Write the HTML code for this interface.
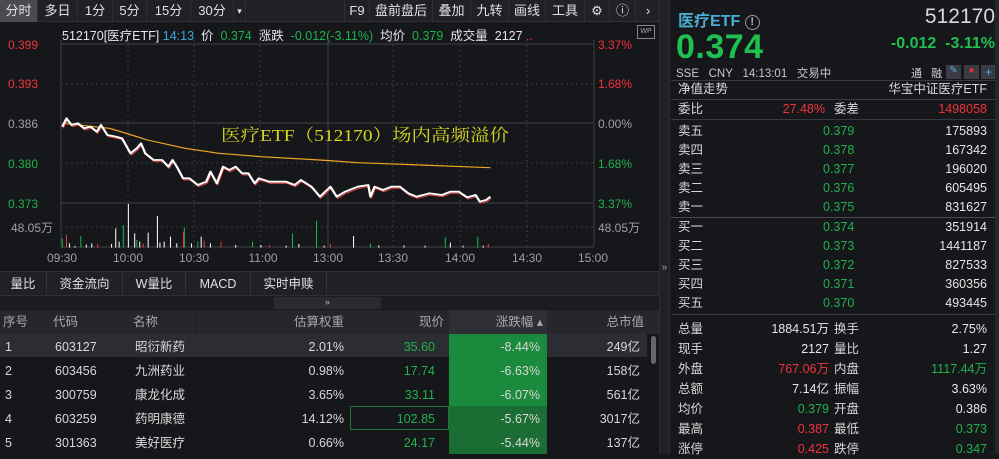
<!DOCTYPE html>
<html><head><meta charset="utf-8"><style>
*{margin:0;padding:0;box-sizing:border-box}
body{width:999px;height:454px;background:#16171b;overflow:hidden;position:relative;font-family:"Liberation Sans","Noto Sans CJK SC",sans-serif;color:#d8d8d8;font-size:12px}
.a{position:absolute;white-space:nowrap}
.g{color:#1fb14c}.r{color:#f0333a}.w{color:#e6e6e6}.gr{color:#a0a0a0}
#tabs{position:absolute;left:0;top:0;width:660px;height:22px;background:#202126;border-bottom:1px solid #2e2f35}
#tabs span{position:absolute;top:0;height:22px;line-height:22px;font-size:13px;color:#e0e0e0;border-right:1px solid #2e2f35;text-align:center}
.rt{position:absolute;left:671px;width:324px}
.row{position:absolute;left:0;width:100%;height:19px;line-height:19px;font-size:12.5px}
.row span{position:absolute}
.tb{position:absolute;left:0;width:660px;height:24px;line-height:24px;font-size:12.5px}
.tb span{position:absolute}
</style></head><body>
<div id="tabs">
<span style="left:0;width:38px;background:#4a4b52">分时</span>
<span style="left:38px;width:40px">多日</span>
<span style="left:78px;width:35px">1分</span>
<span style="left:113px;width:34px">5分</span>
<span style="left:147px;width:44px">15分</span>
<span style="left:191px;width:43px">30分</span>
<span style="left:234px;width:12px;font-size:9px">▾</span>
<span style="left:344px;width:26px;border-left:1px solid #2e2f35">F9</span>
<span style="left:370px;width:63px">盘前盘后</span>
<span style="left:433px;width:38px">叠加</span>
<span style="left:471px;width:38px">九转</span>
<span style="left:509px;width:37px">画线</span>
<span style="left:546px;width:39px">工具</span>
<span style="left:585px;width:25px">⚙</span>
<span style="left:610px;width:26px">ⓘ</span>
<span style="left:636px;width:24px;border:none">›</span>
</div>
<div class="a" style="left:62px;top:25px;font-size:12.5px"><span class="w">512170[医疗ETF]</span> <span style="color:#3aa7d8">14:13</span>&nbsp; <span class="w">价</span>&nbsp; <span class="g">0.374</span>&nbsp; <span class="w">涨跌</span>&nbsp; <span class="g">-0.012(-3.11%)</span>&nbsp; <span class="w">均价</span>&nbsp; <span class="g">0.379</span>&nbsp; <span class="w">成交量</span>&nbsp; <span class="w">2127</span> <span class="r">..</span></div>
<div class="a" style="left:637px;top:25px;width:18px;height:14px;border:1px solid #888;font-size:7px;color:#aaa;text-align:center;line-height:12px">WP</div>
<svg class="a" style="left:0;top:0" width="660" height="270">
<g stroke="#3a3b40" stroke-dasharray="2,3" stroke-width="1">
<line x1="61" y1="84" x2="593" y2="84"/><line x1="61" y1="163" x2="593" y2="163"/><line x1="61" y1="227" x2="593" y2="227"/>
<line x1="128" y1="40" x2="128" y2="247"/><line x1="194" y1="40" x2="194" y2="247"/><line x1="260" y1="40" x2="260" y2="247"/><line x1="393" y1="40" x2="393" y2="247"/><line x1="460" y1="40" x2="460" y2="247"/><line x1="527" y1="40" x2="527" y2="247"/>
</g>
<g stroke="#3f4046" stroke-width="1">
<line x1="61" y1="44" x2="593" y2="44"/><line x1="61" y1="123" x2="593" y2="123"/><line x1="61" y1="203" x2="593" y2="203"/>
<line x1="61" y1="40" x2="61" y2="247"/><line x1="594" y1="40" x2="594" y2="247"/><line x1="328" y1="40" x2="328" y2="247"/>
<line x1="61" y1="247" x2="594" y2="247"/>
</g>
<g transform="translate(0,100) scale(0.4209,0.33333)" fill="none" stroke-linejoin="round">
<polyline stroke="#f5a623" stroke-width="3.5" points="150,70 260,85 300,100 350,120 440,145 520,160 620,170 760,180 850,188 1000,195 1100,200 1165,203"/>
<polyline stroke="#e04040" stroke-width="3" transform="translate(2,5)" points="148,80 158,55 170,75 185,70 200,85 215,80 230,95 240,75 255,105 275,110 290,115 310,160 325,145 335,130 345,160 365,180 385,180 400,200 410,180 420,200 435,235 450,235 470,255 490,245 500,215 515,250 530,200 545,210 560,200 575,220 590,220 605,250 615,235 640,245 660,245 680,245 700,255 715,240 740,260 760,290 785,260 800,290 820,275 840,265 850,260 875,255 880,290 890,260 910,270 930,260 950,260 970,280 990,290 1020,280 1050,285 1070,275 1090,275 1110,292 1130,285 1140,305 1155,300 1165,290"/>
<polyline stroke="#ffffff" stroke-width="5.5" points="148,80 158,55 170,75 185,70 200,85 215,80 230,95 240,75 255,105 275,110 290,115 310,160 325,145 335,130 345,160 365,180 385,180 400,200 410,180 420,200 435,235 450,235 470,255 490,245 500,215 515,250 530,200 545,210 560,200 575,220 590,220 605,250 615,235 640,245 660,245 680,245 700,255 715,240 740,260 760,290 785,260 800,290 820,275 840,265 850,260 875,255 880,290 890,260 910,270 930,260 950,260 970,280 990,290 1020,280 1050,285 1070,275 1090,275 1110,292 1130,285 1140,305 1155,300 1165,290"/>
<g stroke-width="2.4">
<path stroke="#1fb14c" d="M148 443V415M192 443V408M293 443V375M438 443V382M695 443V400M752 443V362M1058 443V412M1135 443V410M600 443V425M880 443V430M325 443V420M470 443V425"/>
<path stroke="#e04040" d="M158 443V405M232 443V432M436 443V395M485 443V422M525 443V425M640 443V435M785 443V432M1160 443V432M340 443V430"/>
<path stroke="#ffffff" d="M165 443V430M178 443V438M205 443V434M218 443V430M265 443V432M275 443V385M283 443V425M305 443V312M320 443V400M332 443V425M352 443V398M374 443V348M380 443V428M390 443V425M405 443V410M420 443V430M455 443V430M478 443V410M500 443V430M560 443V435M620 443V435M680 443V437M710 443V432M770 443V437M840 443V408M900 443V436M960 443V436M1010 443V437M1070 443V428M1100 443V437M1148 443V437"/>
</g>
</g>
<g font-size="12" font-family="Liberation Sans,sans-serif">
<text x="8" y="49" fill="#f0333a">0.399</text><text x="8" y="88" fill="#f0333a">0.393</text><text x="8" y="128" fill="#a0a0a0">0.386</text><text x="8" y="168" fill="#1fb14c">0.380</text><text x="8" y="208" fill="#1fb14c">0.373</text><text x="11" y="232" fill="#a0a0a0">48.05万</text>
<text x="598" y="49" fill="#f0333a">3.37%</text><text x="598" y="88" fill="#f0333a">1.68%</text><text x="598" y="128" fill="#a0a0a0">0.00%</text><text x="598" y="168" fill="#1fb14c">1.68%</text><text x="598" y="208" fill="#1fb14c">3.37%</text><text x="598" y="232" fill="#a0a0a0">48.05万</text>
<g fill="#a0a0a0" text-anchor="middle"><text x="62" y="262">09:30</text><text x="128" y="262">10:00</text><text x="194" y="262">10:30</text><text x="263" y="262">11:00</text><text x="328" y="262">13:00</text><text x="393" y="262">13:30</text><text x="460" y="262">14:00</text><text x="527" y="262">14:30</text><text x="593" y="262">15:00</text></g>
</g>
<text x="221" y="141" font-size="17" fill="#d8d820" textLength="288" lengthAdjust="spacingAndGlyphs" font-family="Liberation Serif,Noto Serif CJK SC,serif">医疗ETF（512170）场内高频溢价</text>
</svg>
<div class="a" style="left:0;top:271px;width:660px;height:25px;background:#202126;border-top:1px solid #2e2f35;border-bottom:1px solid #2e2f35"></div>
<div class="tb" style="top:272px;color:#e0e0e0">
<span style="left:0;width:47px;text-align:center;border-right:1px solid #333">量比</span>
<span style="left:47px;width:76px;text-align:center;border-right:1px solid #333">资金流向</span>
<span style="left:123px;width:63px;text-align:center;border-right:1px solid #333">W量比</span>
<span style="left:186px;width:65px;text-align:center;border-right:1px solid #333">MACD</span>
<span style="left:251px;width:76px;text-align:center;border-right:1px solid #333">实时申赎</span>
</div>
<div class="a" style="left:0;top:296px;width:660px;height:13px;background:#1c1d21"></div>
<div class="a" style="left:274px;top:297px;width:107px;height:12px;background:#2a2b30;font-size:9px;text-align:center;color:#bbb;line-height:11px">»</div>
<div class="tb" style="top:310px;background:#26272c;color:#a8a8a8">
<span style="left:3px">序号</span><span style="left:53px">代码</span><span style="left:133px">名称</span>
<span style="left:196px;width:148px;text-align:right;border-left:1px solid #1c1d21">估算权重</span><span style="left:276px;width:168px;text-align:right">现价</span><span style="left:449px;width:98px;text-align:right;background:#2e2f35;padding-right:4px">涨跌幅 ▴</span><span style="left:520px;width:124px;text-align:right">总市值</span>
</div>
<div class="a" style="left:0;top:334px;width:449px;height:23px;background:#2c2d32"></div>
<div class="a" style="left:547px;top:334px;width:100px;height:23px;background:#2c2d32"></div>
<div class="a" style="left:449px;top:334px;width:98px;height:72px;background:#1b8a3c"></div>
<div class="a" style="left:449px;top:406px;width:98px;height:48px;background:#1a6e33"></div>
<div class="a" style="left:350px;top:406px;width:99px;height:24px;border:1px solid #1b7a36"></div>
<div style="position:absolute;left:0;top:334px;width:660px;font-size:12.5px">
<div class="tb" style="top:1px"><span style="left:5px">1</span><span style="left:55px">603127</span><span style="left:135px">昭衍新药</span><span style="left:247px;width:97px;text-align:right">2.01%</span><span style="left:344px;width:91px;text-align:right" class="g">35.60</span><span style="left:449px;width:91px;text-align:right">-8.44%</span><span style="left:547px;width:93px;text-align:right">249亿</span></div>
<div class="tb" style="top:25px"><span style="left:5px">2</span><span style="left:55px">603456</span><span style="left:135px">九洲药业</span><span style="left:247px;width:97px;text-align:right">0.98%</span><span style="left:344px;width:91px;text-align:right" class="g">17.74</span><span style="left:449px;width:91px;text-align:right">-6.63%</span><span style="left:547px;width:93px;text-align:right">158亿</span></div>
<div class="tb" style="top:49px"><span style="left:5px">3</span><span style="left:55px">300759</span><span style="left:135px">康龙化成</span><span style="left:247px;width:97px;text-align:right">3.65%</span><span style="left:344px;width:91px;text-align:right" class="g">33.11</span><span style="left:449px;width:91px;text-align:right">-6.07%</span><span style="left:547px;width:93px;text-align:right">561亿</span></div>
<div class="tb" style="top:73px"><span style="left:5px">4</span><span style="left:55px">603259</span><span style="left:135px">药明康德</span><span style="left:247px;width:97px;text-align:right">14.12%</span><span style="left:344px;width:91px;text-align:right" class="g">102.85</span><span style="left:449px;width:91px;text-align:right">-5.67%</span><span style="left:547px;width:93px;text-align:right">3017亿</span></div>
<div class="tb" style="top:97px"><span style="left:5px">5</span><span style="left:55px">301363</span><span style="left:135px">美好医疗</span><span style="left:247px;width:97px;text-align:right">0.66%</span><span style="left:344px;width:91px;text-align:right" class="g">24.17</span><span style="left:449px;width:91px;text-align:right">-5.44%</span><span style="left:547px;width:93px;text-align:right">137亿</span></div>
</div>
<div class="a" style="left:651px;top:336px;width:5px;height:28px;background:#666;border-radius:3px"></div>
<div class="a" style="left:659px;top:0;width:11px;height:454px;background:#202126;border-left:1px solid #2e2f35;border-right:1px solid #2e2f35;color:#aaa;font-size:10px;text-align:center;line-height:12px;padding-top:262px">»</div>
<div class="a" style="left:671px;top:0;width:328px;height:454px;background:#16171b"></div>
<div class="rt" style="top:0;height:454px">
<div class="a" style="left:7px;top:7px;font-size:16px;font-weight:bold;color:#4aaed3">医疗ETF <span style="display:inline-block;width:15px;height:15px;border:1.5px solid #999;border-radius:50%;font-size:11px;color:#bbb;text-align:center;line-height:12px;vertical-align:1px">!</span></div>
<div class="a" style="right:0;top:5px;font-size:21px;color:#d8d8d8">512170</div>
<div class="a" style="left:5px;top:28px;font-size:34px;font-weight:bold;color:#1fc050;letter-spacing:0.5px">0.374</div>
<div class="a" style="right:0;top:35px;font-size:16px;font-weight:bold;color:#1fc050">-0.012&nbsp; -3.11%</div>
<div class="a" style="left:5px;top:65px;font-size:11.5px;color:#c8c8c8">SSE&nbsp;&nbsp; CNY&nbsp;&nbsp; 14:13:01&nbsp;&nbsp; 交易中</div>
<div class="a" style="left:240px;top:65px;font-size:11px;color:#ccc">通&nbsp;&nbsp; 融</div>
<div class="a" style="left:275px;top:65px;width:15px;height:14px;background:#3a3b44;color:#4aaed3;font-size:10px;text-align:center">✎</div>
<div class="a" style="left:293px;top:65px;width:15px;height:14px;background:#3a3b44;color:#e03030;font-size:10px;text-align:center">●</div>
<div class="a" style="left:310px;top:65px;width:15px;height:14px;background:#3a3b44;color:#4aaed3;font-size:12px;text-align:center;line-height:14px">+</div>
<div class="a" style="left:0;top:80px;width:324px;border-top:1px solid #3a3b40"></div>
<div class="row" style="top:80px"><span style="left:7px">净值走势</span><span style="right:8px">华宝中证医疗ETF</span></div>
<div class="a" style="left:0;top:99px;width:324px;border-top:1px solid #3a3b40"></div>
<div class="row" style="top:100px"><span style="left:7px">委比</span><span style="right:170px" class="r">27.48%</span><span style="left:163px">委差</span><span style="right:8px" class="r">1498058</span></div>
<div class="a" style="left:0;top:119px;width:324px;border-top:1px solid #3a3b40"></div>
<div class="row" style="top:122px"><span style="left:7px">卖五</span><span style="left:152px" class="g">0.379</span><span style="right:8px" class="w">175893</span></div>
<div class="row" style="top:141px"><span style="left:7px">卖四</span><span style="left:152px" class="g">0.378</span><span style="right:8px" class="w">167342</span></div>
<div class="row" style="top:160px"><span style="left:7px">卖三</span><span style="left:152px" class="g">0.377</span><span style="right:8px" class="w">196020</span></div>
<div class="row" style="top:179px"><span style="left:7px">卖二</span><span style="left:152px" class="g">0.376</span><span style="right:8px" class="w">605495</span></div>
<div class="row" style="top:198px"><span style="left:7px">卖一</span><span style="left:152px" class="g">0.375</span><span style="right:8px" class="w">831627</span></div>
<div class="a" style="left:0;top:217px;width:324px;border-top:1px solid #4a4b50"></div>
<div class="row" style="top:218px"><span style="left:7px">买一</span><span style="left:152px" class="g">0.374</span><span style="right:8px" class="w">351914</span></div>
<div class="row" style="top:237px"><span style="left:7px">买二</span><span style="left:152px" class="g">0.373</span><span style="right:8px" class="w">1441187</span></div>
<div class="row" style="top:256px"><span style="left:7px">买三</span><span style="left:152px" class="g">0.372</span><span style="right:8px" class="w">827533</span></div>
<div class="row" style="top:275px"><span style="left:7px">买四</span><span style="left:152px" class="g">0.371</span><span style="right:8px" class="w">360356</span></div>
<div class="row" style="top:294px"><span style="left:7px">买五</span><span style="left:152px" class="g">0.370</span><span style="right:8px" class="w">493445</span></div>
<div class="a" style="left:0;top:314px;width:324px;border-top:1px solid #3a3b40"></div>
<div class="row" style="top:320px"><span style="left:7px">总量</span><span style="right:166px" class="w">1884.51万</span><span style="left:163px">换手</span><span style="right:8px" class="w">2.75%</span></div>
<div class="row" style="top:340px"><span style="left:7px">现手</span><span style="right:166px" class="w">2127</span><span style="left:163px">量比</span><span style="right:8px" class="w">1.27</span></div>
<div class="row" style="top:360px"><span style="left:7px">外盘</span><span style="right:166px" class="r">767.06万</span><span style="left:163px">内盘</span><span style="right:8px" class="g">1117.44万</span></div>
<div class="row" style="top:380px"><span style="left:7px">总额</span><span style="right:166px" class="w">7.14亿</span><span style="left:163px">振幅</span><span style="right:8px" class="w">3.63%</span></div>
<div class="row" style="top:400px"><span style="left:7px">均价</span><span style="right:166px" class="g">0.379</span><span style="left:163px">开盘</span><span style="right:8px" class="w">0.386</span></div>
<div class="row" style="top:420px"><span style="left:7px">最高</span><span style="right:166px" class="r">0.387</span><span style="left:163px">最低</span><span style="right:8px" class="g">0.373</span></div>
<div class="row" style="top:440px"><span style="left:7px">涨停</span><span style="right:166px" class="r">0.425</span><span style="left:163px">跌停</span><span style="right:8px" class="g">0.347</span></div>
</div>
<div class="a" style="left:995px;top:0;width:4px;height:454px;background:#26272c"></div>
</body></html>
